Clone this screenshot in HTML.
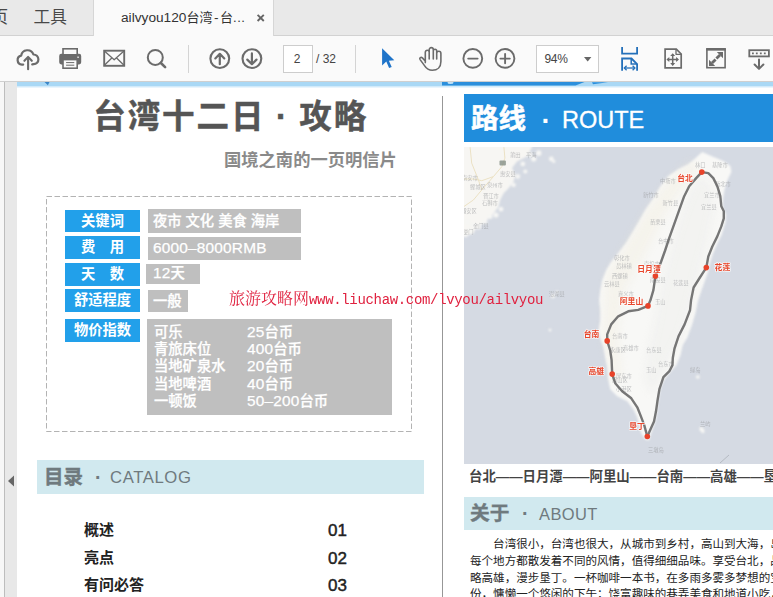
<!DOCTYPE html>
<html lang="zh-CN">
<head>
<meta charset="utf-8">
<title>ailvyou120台湾-台湾十二日攻略</title>
<style>
*{box-sizing:border-box;margin:0;padding:0}
html,body{width:773px;height:597px;overflow:hidden;background:#fff}
body{position:relative;font-family:"Liberation Sans","Noto Sans CJK SC",sans-serif;color:#333}
.abs{position:absolute}
#tabbar{left:0;top:0;width:773px;height:36px;background:#e9e9e9;border-bottom:1px solid #d2d2d2}
#tab{left:93px;top:0;width:181px;height:36px;background:#fafafa;border-left:1px solid #d6d6d6;border-right:1px solid #d6d6d6}
.menu{top:7px;font-size:16.700px;line-height:22px;color:#484848;white-space:nowrap}
#toolbar{left:0;top:36px;width:773px;height:46px;background:#fafafa;border-bottom:1px solid #cfcfcf}
.sep{top:45px;width:1px;height:28px;background:#d4d4d4}
.inp{background:#fff;border:1px solid #cdcdcd;font-size:12px;color:#444;line-height:26px;height:28px;top:45px;letter-spacing:-.300px}
#doc{left:0;top:82px;width:773px;height:515px;background:#e8e8e8}
#gutter{left:0;top:82px;width:5px;height:515px;background:#f7f7f7;border-right:1px solid #bdbdbd}
#page{left:17px;top:82px;width:756px;height:515px;background:#fff}
.t{white-space:nowrap;position:absolute}
.lab{position:absolute;left:65px;width:75px;background:#22a0ea;color:#fff;font-weight:bold;font-size:14.300px;text-align:center;white-space:nowrap}
.val{position:absolute;background:#bfbfbf;color:#fff;font-size:14.300px;font-weight:500;-webkit-text-stroke:.250px #fff;white-space:nowrap}
.n{font-size:15.400px;line-height:0;letter-spacing:.200px}
.cat{font-weight:bold;font-size:15px;color:#222;left:84px}
.num{font-size:17px;color:#222;left:328px;-webkit-text-stroke:.450px #222;margin-top:.600px}
.body{font-size:11.550px;line-height:16.8px;color:#222;left:470px;white-space:nowrap}
</style>
</head>
<body>
<!-- document area -->
<div id="doc" class="abs"></div>
<div id="gutter" class="abs"></div>
<div id="page" class="abs"></div>
<!-- top strips -->
<svg class="abs" style="left:17px;top:82px" width="756" height="6" viewBox="17 82 756 6">
<rect x="17" y="82" width="756" height="4.300" fill="#a9d8f5"/><rect x="17" y="86.300" width="756" height="1.100" fill="#c9e6f9"/>
<path d="M442 82h142.500l-9 3.600h-133.500z" fill="#2b8fdc"/>
<path d="M592 82.300h16l-15 2z" fill="#2b8fdc"/>
<path d="M44.500 82h5l-1.600 3.200z" fill="#3a86c8"/>
<ellipse cx="450.500" cy="82.800" rx="3" ry="1.200" fill="#bfe2f8"/>
</svg>
<!-- LEFT COLUMN -->
<div class="t" style="left:93.300px;top:93.500px;font-size:32.500px;letter-spacing:1.900px;line-height:46px;font-weight:bold;color:#555;-webkit-text-stroke:.500px #555">台湾十二日<span style="display:inline-block;width:34px;text-align:center">·</span>攻略</div>
<div class="t" style="left:224px;top:148.300px;font-size:17.300px;line-height:24px;font-weight:bold;color:#8a8a8a">国境之南的一页明信片</div>

<svg class="abs" style="left:45px;top:195px" width="368" height="238" viewBox="0 0 368 238"><rect x="1.500" y="1.500" width="365" height="235" fill="none" stroke="#b3b3b3" stroke-width="1" stroke-dasharray="5.500 2.500"/></svg>

<div class="lab" style="top:210px;height:22px;line-height:22px">关键词</div>
<div class="lab" style="top:236px;height:23px;line-height:23px">费&emsp;用</div>
<div class="lab" style="top:263px;height:23px;line-height:23px">天&emsp;数</div>
<div class="lab" style="top:289px;height:23px;line-height:23px">舒适程度</div>
<div class="lab" style="top:319px;height:23px;line-height:23px">物价指数</div>

<div class="val" style="left:148px;top:209px;width:153px;height:24px;line-height:24.500px;padding-left:5px">夜市 文化 美食 海岸</div>
<div class="val" style="left:148px;top:237px;width:153px;height:23px;line-height:23px;padding-left:5px"><span class="n">6000–8000RMB</span></div>
<div class="val" style="left:146px;top:264px;width:54px;height:19.600px;line-height:19.600px;padding-left:7px"><span class="n">12</span>天</div>
<div class="val" style="left:148px;top:290px;width:40px;height:22px;line-height:22px;padding-left:5px">一般</div>
<div class="val" style="left:147px;top:319px;width:245px;height:96px;padding:5px 0 0 7px;line-height:17.2px">
<div><span style="display:inline-block;width:93px">可乐</span><span class="n">25</span>台币</div>
<div><span style="display:inline-block;width:93px">青旅床位</span><span class="n">400</span>台币</div>
<div><span style="display:inline-block;width:93px">当地矿泉水</span><span class="n">20</span>台币</div>
<div><span style="display:inline-block;width:93px">当地啤酒</span><span class="n">40</span>台币</div>
<div><span style="display:inline-block;width:93px">一顿饭</span><span class="n">50–200</span>台币</div>
</div>

<div class="abs" style="left:37px;top:460px;width:387px;height:34px;background:#d1e9ef"></div>
<div class="t" style="left:44px;top:463px;font-size:19.500px;line-height:28px;font-weight:bold;color:#6f7a7e;-webkit-text-stroke:.400px #6f7a7e">目录</div>
<div class="t" style="left:95px;top:463px;font-size:19.500px;line-height:28px;font-weight:bold;color:#6f7a7e">·</div>
<div class="t" style="left:110px;top:467px;font-size:16.7px;line-height:22px;color:#6f7a7e;letter-spacing:0.600px">CATALOG</div>

<div class="t cat" style="top:519px;line-height:22px">概述</div>
<div class="t cat" style="top:547px;line-height:22px">亮点</div>
<div class="t cat" style="top:574px;line-height:22px">有问必答</div>
<div class="t num" style="top:519px;line-height:22px">01</div>
<div class="t num" style="top:547px;line-height:22px">02</div>
<div class="t num" style="top:574px;line-height:22px">03</div>

<!-- left panel arrow -->
<svg class="abs" style="left:7px;top:475px" width="8" height="12" viewBox="0 0 8 12"><path d="M7 0.5 L1 6 L7 11.5 Z" fill="#666"/></svg>

<!-- divider -->
<div class="abs" style="left:442px;top:96px;width:1px;height:501px;background:#979797"></div>

<!-- RIGHT COLUMN -->
<div class="abs" style="left:464px;top:94px;width:309px;height:48px;background:#208ddc"></div>
<div class="t" style="left:471px;top:98.500px;font-size:27.500px;line-height:40px;font-weight:bold;color:#fff;-webkit-text-stroke:.500px #fff">路线</div>
<div class="t" style="left:541.500px;top:101px;font-size:27.500px;line-height:40px;font-weight:bold;color:#fff">·</div>
<div class="t" style="left:562px;top:103.700px;font-size:23.500px;line-height:32px;color:#fff;-webkit-text-stroke:.300px #fff">ROUTE</div>

<!-- map -->
<svg id="map" class="abs" style="left:464px;top:147px" width="309" height="317" viewBox="0 1 309 317">
<defs>
<filter id="b1" x="-10%" y="-10%" width="120%" height="120%"><feGaussianBlur stdDeviation="0.800"/></filter>
<filter id="b2" x="-20%" y="-20%" width="140%" height="140%"><feGaussianBlur stdDeviation="4"/></filter>
<filter id="b3" x="-20%" y="-20%" width="140%" height="140%"><feGaussianBlur stdDeviation="0.5"/></filter>
</defs>
<rect width="309" height="318" fill="#d5dae3"/>
<g filter="url(#b1)">
<polygon points="-4.0,-6.0 68.0,-6.0 68.0,1.2 63.0,10.4 53.0,15.4 48.0,22.0 51.3,28.8 49.6,35.5 44.6,42.2 39.6,47.3 36.2,54.0 34.5,60.7 29.5,67.4 24.5,72.4 19.5,77.4 12.8,80.8 9.4,87.5 -0.3,90.8 -4.0,92.0" fill="#f7f6f3"/>
<g fill="#f6f6f4"><circle cx="87.3" cy="12.9" r="2.4"/><circle cx="89.8" cy="15.4" r="1.6"/><circle cx="74.7" cy="7.1" r="2.8"/><circle cx="69.7" cy="12.9" r="2.6"/><circle cx="66.4" cy="8.7" r="2.4"/><circle cx="58.8" cy="17.9" r="2.4"/><circle cx="61.3" cy="25.5" r="2.1"/><circle cx="53.8" cy="30.5" r="2.4"/><circle cx="49.6" cy="38.9" r="2.2"/><circle cx="46.3" cy="36.4" r="1.9"/><circle cx="37.0" cy="63.2" r="2.4"/><circle cx="32.0" cy="69.0" r="2.6"/><circle cx="26.2" cy="70.7" r="2.4"/><circle cx="21.1" cy="75.7" r="2.4"/><circle cx="14.4" cy="80.8" r="2.7"/><circle cx="9.4" cy="79.1" r="2.4"/><circle cx="6.1" cy="84.1" r="2.4"/><circle cx="3.5" cy="75.7" r="2.4"/><circle cx="1.9" cy="89.1" r="2.1"/><circle cx="89" cy="150" r="2.200"/><circle cx="93" cy="146" r="1.600"/><circle cx="86" cy="184" r="1.500"/><ellipse cx="233.800" cy="231" rx="2" ry="1.700"/><ellipse cx="238" cy="284" rx="2" ry="3.500" transform="rotate(-35 238 284)"/></g>
<polygon points="238.2,6.0 247.3,10.0 259.4,15.0 266.4,20.1 267.4,26.1 263.4,34.2 260.4,44.2 258.8,54.3 259.0,62.3 262.0,68.3 261.6,76.0 257.8,88.4 252.8,98.5 248.6,108.5 245.6,118.6 244.0,126.0 238.5,141.5 234.2,154.0 231.6,166.4 228.0,178.9 223.4,191.4 218.8,199.0 216.5,209.1 212.5,219.1 206.5,226.1 200.4,233.2 196.4,243.2 194.4,255.3 193.4,265.3 191.4,275.4 188.4,283.4 186.4,289.5 185.3,293.5 184.3,294.5 181.3,293.5 177.3,287.4 175.3,279.4 173.3,271.4 169.3,263.3 163.2,255.3 153.2,250.3 146.2,243.2 144.1,233.2 143.1,221.1 141.1,211.1 139.2,200.5 136.2,192.4 134.5,184.4 136.2,174.4 136.2,164.3 135.1,154.3 136.2,144.2 138.2,134.2 142.2,124.1 147.0,116.0 155.0,106.0 162.1,96.5 168.2,86.4 175.2,74.4 182.2,62.3 189.3,52.2 196.3,40.2 204.3,30.1 214.4,23.1 224.4,18.1 230.5,13.0" fill="#f8f8f6"/>
</g>
<g fill="none" stroke="#eadfbf" stroke-width="1" opacity=".9" filter="url(#b3)"><path d="M-0.3 60.7 L9.4 54.0 L17.8 43.9 L29.5 30.5 L37.9 20.5 L40.9 12.1 L39.9 1.2"/><path d="M-0.3 33.0 L9.4 33.0 L17.8 34.7 L29.5 30.5"/><path d="M6.1 1.2 L7.7 17.1 L14.4 33.9 L17.8 43.9"/></g><rect x="35.5" y="14.6" width="6.400" height="5" rx="1" fill="#8b948b" opacity=".85"/>
<g filter="url(#b2)" opacity=".28"><polygon points="236.0,29.0 248.0,39.0 250.0,64.0 244.0,94.0 236.0,124.0 228.0,154.0 220.0,184.0 208.0,209.0 196.0,234.0 188.0,249.0 181.0,234.0 184.0,204.0 191.0,174.0 196.0,144.0 204.0,114.0 212.0,84.0 220.0,59.0 228.0,39.0" fill="#e4e5e4"/></g>
<g filter="url(#b2)" opacity=".3"><polygon points="226.0,14.0 204.0,34.0 181.0,66.0 161.0,99.0 142.0,129.0 139.0,194.0 148.0,234.0 158.0,234.0 154.0,184.0 161.0,144.0 181.0,109.0 201.0,69.0 221.0,39.0 236.0,22.0" fill="#efe9d8"/></g>
<g font-family="'Liberation Sans','Noto Sans CJK SC',sans-serif" font-size="5.300" fill="#9a9c9f" opacity=".62" filter="url(#b3)">
<text x="231.0" y="21.0" text-anchor="start">林口</text><text x="248.0" y="20.5" text-anchor="start">基隆市</text><text x="196.0" y="37.0" text-anchor="start">中坜市</text><text x="179.0" y="50.5" text-anchor="start">新竹市</text><text x="198.5" y="58.5" text-anchor="start">新竹县</text><text x="186.0" y="78.0" text-anchor="start">苗栗县</text><text x="194.0" y="97.0" text-anchor="start">台中市</text><text x="240.0" y="50.5" text-anchor="start">宜兰市</text><text x="237.0" y="63.0" text-anchor="start">宜兰县</text><text x="251.0" y="40.0" text-anchor="start">新北市</text><text x="140.0" y="139.5" text-anchor="start">云林县</text><text x="186.0" y="136.0" text-anchor="start">南投县</text><text x="191.0" y="158.0" text-anchor="start">玉山</text><text x="209.0" y="138.5" text-anchor="start">花莲县</text><text x="148.0" y="192.0" text-anchor="start">台南市</text><text x="159.0" y="203.5" text-anchor="start">高雄市</text><text x="182.0" y="206.0" text-anchor="start">台东县</text><text x="194.0" y="219.5" text-anchor="start">台东市</text><text x="152.0" y="232.0" text-anchor="start">屏东市</text><text x="182.0" y="225.5" text-anchor="start">玉山</text><text x="236.0" y="280.0" text-anchor="start">兰屿</text><text x="184.0" y="306.0" text-anchor="start">三墩岛</text><text x="150.0" y="114.0" text-anchor="start">彰化市</text><text x="152.0" y="122.0" text-anchor="start">员林镇</text><text x="180.0" y="120.0" text-anchor="start">南投市</text><text x="148.0" y="132.0" text-anchor="start">西螺镇</text><text x="154.0" y="150.0" text-anchor="start">嘉义市</text><text x="146.0" y="206.0" text-anchor="start">永康区</text><text x="148.0" y="236.0" text-anchor="start">凤山区</text><text x="152.0" y="245.0" text-anchor="start">小港区</text><text x="226.0" y="226.0" text-anchor="start">绿岛</text><text x="23.0" y="40.5" text-anchor="start">泉州市</text><text x="19.0" y="52.0" text-anchor="start">晋江市</text><text x="18.0" y="58.5" text-anchor="start">石狮市</text><text x="36.0" y="30.0" text-anchor="start">惠安县</text><text x="46.0" y="10.5" text-anchor="start">莆田</text><text x="62.0" y="10.5" text-anchor="start">平海</text><text x="-2.0" y="33.5" text-anchor="start">南安市</text><text x="6.0" y="43.0" text-anchor="start">鲤城区</text><text x="-3.0" y="66.5" text-anchor="start">翔安区</text><text x="9.0" y="82.0" text-anchor="start">金门县</text><text x="-1.0" y="88.0" text-anchor="start">厦门</text><text x="85.0" y="150.0" text-anchor="start">澎湖县</text>
</g>
<g fill="none" stroke="#6c6c6c" stroke-width="2.400" stroke-linejoin="round" stroke-linecap="round" opacity=".93">
<polyline points="237.8,26.1 232.2,32.1 225.2,40.2 220.2,50.2 215.1,64.3 210.1,78.4 205.1,92.4 201.1,104.5 197.0,116.0 191.4,130.1 189.4,144.2 186.4,154.3 184.0,159.9 174.3,163.9 164.3,165.3 154.2,170.3 147.2,178.4 143.2,188.4 143.2,194.9 146.2,204.5 147.6,214.0 148.2,228.1 151.2,237.2 158.2,245.2 167.3,252.3 173.3,261.3 177.3,271.4 180.3,279.4 183.3,290.5"/>
<polyline points="237.8,26.1 244.3,27.1 249.3,32.1 253.3,40.2 256.3,50.2 257.3,60.3 259.8,65.3 259.8,72.3 257.3,80.4 253.3,90.4 248.3,100.5 244.3,110.5 242.3,121.6 235.9,131.5 229.6,141.5 227.1,153.9 226.0,164.3 220.6,178.4 214.5,190.4 210.5,202.5 208.8,212.0 208.5,219.1 205.4,225.1 199.4,231.2 195.4,243.2 193.4,255.3 192.0,265.3 190.0,275.4 186.4,283.4 183.3,290.5"/>
</g>
<g fill="#e8432a"><circle cx="237.8" cy="26.1" r="2.800"/><circle cx="191.4" cy="130.1" r="2.800"/><circle cx="184.0" cy="159.9" r="2.800"/><circle cx="143.2" cy="194.9" r="2.800"/><circle cx="148.2" cy="228.1" r="2.800"/><circle cx="183.3" cy="290.5" r="2.800"/><circle cx="242.3" cy="121.6" r="2.800"/></g>
<g font-family="'Liberation Sans','Noto Sans CJK SC',sans-serif" font-size="7.800" font-weight="bold" fill="#e8472c" stroke="#fff" stroke-width="1.500" stroke-opacity=".75" paint-order="stroke" stroke-linejoin="round"><text x="213.2" y="34.6">台北</text><text x="173.3" y="125.6">日月潭</text><text x="250.6" y="123.6">花莲</text><text x="155.8" y="158.0">阿里山</text><text x="119.7" y="190.6">台南</text><text x="124.4" y="227.6">高雄</text><text x="165.2" y="283.2">垦丁</text></g>
<path d="M256 317l9-8" stroke="#b5bac2" stroke-width="1" fill="none"/>
</svg>

<div class="t" style="left:469px;top:467px;font-size:13.400px;line-height:20px;font-weight:bold;color:#444">台北——日月潭——阿里山——台南——高雄——垦丁</div>

<div class="abs" style="left:464px;top:497px;width:309px;height:33px;background:#d1e9ef"></div>
<div class="t" style="left:470px;top:499px;font-size:19.700px;line-height:28px;font-weight:bold;color:#6f7a7e;-webkit-text-stroke:.400px #6f7a7e">关于</div>
<div class="t" style="left:522px;top:499px;font-size:19.7px;line-height:28px;font-weight:bold;color:#6f7a7e">·</div>
<div class="t" style="left:539px;top:503px;font-size:16.500px;line-height:22px;color:#6f7a7e;letter-spacing:.400px">ABOUT</div>

<div class="t body" style="top:536px">
<div style="padding-left:23.100px">台湾很小，台湾也很大，从城市到乡村，高山到大海，岛屿的</div>
<div>每个地方都散发着不同的风情，值得细细品味。享受台北，品味台南，领</div>
<div>略高雄，漫步垦丁。一杯咖啡一本书，在多雨多雾多梦想的宝岛，过一个月</div>
<div>份，慵懒一个悠闲的下午；饶富趣味的巷弄美食和地道小吃，</div>
</div>

<!-- watermark -->
<div class="t" style="left:229px;top:287px;font-family:'Liberation Mono','Noto Serif CJK SC',monospace;color:#e0213f;line-height:22px"><span style="font-family:'Noto Serif CJK SC',serif;font-size:16px">旅游攻略网</span><span style="font-size:14px;letter-spacing:-0.33px">www.liuchaw.com/lvyou/ailvyou</span></div>

<!-- CHROME -->
<div id="tabbar" class="abs"></div>
<div id="tab" class="abs"></div>
<div class="t menu" style="left:-8.500px">页</div>
<div class="t menu" style="left:33.500px">工具</div>
<div class="t" style="left:121px;top:9px;font-size:13px;line-height:18px;color:#333"><span style="font-size:13.700px">ailvyou120</span>台湾<span style="font-size:13.700px;letter-spacing:1.500px;margin-left:1.500px">-</span>台<span style="letter-spacing:.500px">...</span></div>
<svg class="abs" style="left:256px;top:13px" width="10" height="10" viewBox="0 0 10 10"><path d="M1.600 1.800l6.200 6.200M7.800 1.800l-6.200 6.200" stroke="#666" stroke-width="1.900"/></svg>
<div id="toolbar" class="abs"></div>
<div class="abs sep" style="left:188px"></div>
<div class="abs sep" style="left:355px"></div>
<div class="abs inp" style="left:283px;width:30px;text-align:center;padding-right:2px">2</div>
<div class="t" style="left:316px;top:50px;font-size:12px;line-height:18px;color:#444">/ 32</div>
<div class="abs inp" style="left:536px;width:63px;padding-left:7.500px">94%</div>
<svg class="abs" style="left:583px;top:56px" width="10" height="7" viewBox="0 0 10 7"><path d="M1 1h7.400L4.700 5.400z" fill="#666"/></svg>
<svg class="abs" style="left:0;top:0" width="773" height="82" viewBox="0 0 773 82" fill="none" stroke="#6b6b6b" stroke-width="1.9" stroke-linecap="round" stroke-linejoin="round">
<!-- cloud upload -->
<path d="M23.200 64.600h-1.300a4.500 4.500 0 0 1-.7-8.900a6.300 6.300 0 0 1 12.200-1.200a4.500 4.500 0 0 1 .3 9.700l-1.500.200" stroke-width="2.200"/>
<path d="M28.100 69.200V57.800M24.400 60.800l3.700-3.900l3.700 3.900" stroke-width="2.100"/>
<!-- printer -->
<rect x="60" y="54.6" width="20.4" height="9" rx="1.3" fill="#6b6b6b" stroke-width="1.6"/>
<rect x="63" y="48.8" width="14.2" height="6" fill="#fafafa" stroke-width="1.6" stroke-linejoin="miter"/>
<rect x="63" y="59.6" width="14.2" height="8.6" fill="#fafafa" stroke-width="1.6" stroke-linejoin="miter"/>
<path d="M66.5 62.6h7.4M66.5 65.2h7.4" stroke-width="1"/>
<rect x="77.3" y="56.6" width="1.6" height="1.2" fill="#fafafa" stroke="none"/>
<!-- mail -->
<rect x="104.200" y="50.700" width="20" height="15.100" stroke-width="1.900" stroke-linejoin="miter"/>
<path d="M104.4 51l9.8 8.7l9.8-8.7M104.4 65.2l7.4-7.2M124 65.2l-7.4-7.2" stroke-width="1.3"/>
<!-- search -->
<circle cx="155.3" cy="57.4" r="7.5" stroke-width="2"/>
<path d="M160.900 63l4.200 4.100" stroke-width="2.6"/>
<!-- up / down -->
<circle cx="219.800" cy="58.600" r="9.400" stroke-width="2.100"/>
<path d="M219.800 64.200V54.200M215.300 58.400l4.500-4.600l4.500 4.600" stroke-width="2.200"/>
<circle cx="251.900" cy="58.600" r="9.400" stroke-width="2.100"/>
<path d="M251.900 53.400V63.600M247.300 59.600l4.600 4.600l4.600-4.600" stroke-width="2.200"/>
<!-- hand -->
<path d="M425.300 62.600V52.200a1.950 1.950 0 0 1 3.900 0V59M429.200 52.200V49.700a2.050 2.050 0 0 1 4.100 0V59M433.300 50.900a1.700 1.700 0 0 1 3.400 0V59M436.700 53.400a2.100 2.100 0 0 1 4.200 0V61.500c0 5.600-3.400 8.800-8.600 8.800c-3.600 0-5.800-1.500-7.600-4.400l-4.600-6.300c-1-1.500 .8-3 2.300-1.700l3 3.300" stroke-width="1.600"/>
<!-- zoom out / in -->
<circle cx="472.8" cy="58.4" r="9.400"/>
<path d="M468.200 58.600h9.400"/>
<circle cx="505" cy="58.400" r="9.400"/>
<path d="M500.400 58.600h9.400M505.100 54v9.300"/>
<!-- select arrow (blue) -->
<path d="M382.100 48.200v17.400l4.200-4l2.800 6.500l2.600-1.200l-2.800-6.200l5.400-.4z" fill="#1f74c9" stroke="none"/>
<!-- fit width (blue) -->
<g stroke="#2470ba" stroke-width="1.800" stroke-linecap="butt" stroke-linejoin="miter">
<path d="M622.100 47v6.600h15v-6.600"/>
<path d="M622.100 70.800v-12.300h9.400l5.600 5.600v6.700"/>
<path d="M631.200 58.600v5.400h5.800" stroke-width="1.500"/>
<path d="M624.600 68h10" stroke-width="1.300"/>
<path d="M626.600 65.800l-2.300 2.200l2.300 2.200M632.600 65.800l2.300 2.200l-2.300 2.200" stroke-width="1.300"/>
</g>
<!-- fit page -->
<path d="M665.100 49.100h11.200l4.900 4.900v13.800h-16.100z" stroke-width="1.700" stroke-linejoin="miter"/>
<path d="M676 49.300v5h5" stroke-width="1.300"/>
<path d="M668 59.600h9.400M672.700 54.800v9.600" stroke-width="1.500"/>
<path d="M672.700 53.200l2.500 2.900h-5zM672.700 66l2.500-2.900h-5zM666.400 59.600l2.900-2.500v5zM679 59.600l-2.900-2.500v5z" fill="#6b6b6b" stroke="none"/>
<!-- full screen -->
<rect x="706.900" y="49.600" width="18.200" height="18.100" stroke-width="1.600" stroke-linejoin="miter"/>
<path d="M706.100 49.200h19.800" stroke-width="2.400" stroke-linecap="butt"/>
<path d="M720 55l-3.600 3.600M712 63l3.600-3.600" stroke-width="2.800" stroke-linecap="butt"/>
<path d="M716.800 52h6.200v6.200zM709 66h6.200l-6.200-6.200z" fill="#6b6b6b" stroke="none"/>
<!-- keyboard down -->
<rect x="749.300" y="50.200" width="19.600" height="6.200" stroke-width="1.800" stroke-linejoin="miter"/>
<path d="M752 53.300h1.800M755.900 53.300h1.800M759.900 53.300h1.800M763.900 53.300h1.800" stroke-width="1.800" stroke-linecap="butt"/>
<path d="M759 59.400v9.200M754.600 64.500l4.400 4.400l4.400-4.400" stroke-width="2"/>
</svg>
</body>
</html>
